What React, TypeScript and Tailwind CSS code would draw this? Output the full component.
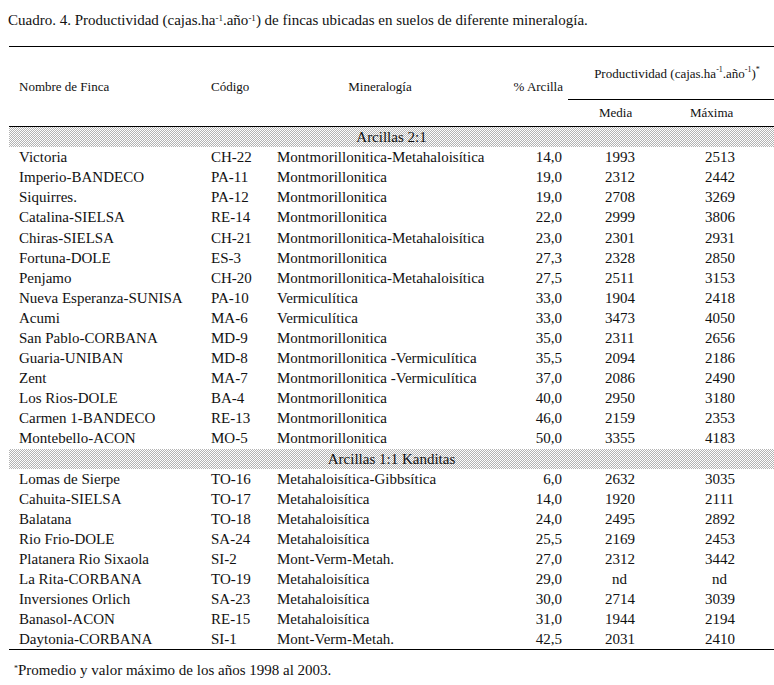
const grupo1 = [
  ["Victoria", "CH-22", "Montmorillonitica-Metahaloisítica", "14,0", "1993", "2513"],
  ["Imperio-BANDECO", "PA-11", "Montmorillonitica", "19,0", "2312", "2442"],
  ["Siquirres.", "PA-12", "Montmorillonitica", "19,0", "2708", "3269"],
  ["Catalina-SIELSA", "RE-14", "Montmorillonitica", "22,0", "2999", "3806"],
  ["Chiras-SIELSA", "CH-21", "Montmorillonitica-Metahaloisítica", "23,0", "2301", "2931"],
  ["Fortuna-DOLE", "ES-3", "Montmorillonitica", "27,3", "2328", "2850"],
  ["Penjamo", "CH-20", "Montmorillonitica-Metahaloisítica", "27,5", "2511", "3153"],
  ["Nueva Esperanza-SUNISA", "PA-10", "Vermiculítica", "33,0", "1904", "2418"],
  ["Acumi", "MA-6", "Vermiculítica", "33,0", "3473", "4050"],
  ["San Pablo-CORBANA", "MD-9", "Montmorillonitica", "35,0", "2311", "2656"],
  ["Guaria-UNIBAN", "MD-8", "Montmorillonitica -Vermiculítica", "35,5", "2094", "2186"],
  ["Zent", "MA-7", "Montmorillonitica -Vermiculítica", "37,0", "2086", "2490"],
  ["Los Rios-DOLE", "BA-4", "Montmorillonitica", "40,0", "2950", "3180"],
  ["Carmen 1-BANDECO", "RE-13", "Montmorillonitica", "46,0", "2159", "2353"],
  ["Montebello-ACON", "MO-5", "Montmorillonitica", "50,0", "3355", "4183"],
];

const grupo2 = [
  ["Lomas de Sierpe", "TO-16", "Metahaloisítica-Gibbsítica", "6,0", "2632", "3035"],
  ["Cahuita-SIELSA", "TO-17", "Metahaloisítica", "14,0", "1920", "2111"],
  ["Balatana", "TO-18", "Metahaloisítica", "24,0", "2495", "2892"],
  ["Rio Frio-DOLE", "SA-24", "Metahaloisítica", "25,5", "2169", "2453"],
  ["Platanera Rio Sixaola", "SI-2", "Mont-Verm-Metah.", "27,0", "2312", "3442"],
  ["La Rita-CORBANA", "TO-19", "Metahaloisítica", "29,0", "nd", "nd"],
  ["Inversiones Orlich", "SA-23", "Metahaloisítica", "30,0", "2714", "3039"],
  ["Banasol-ACON", "RE-15", "Metahaloisítica", "31,0", "1944", "2194"],
  ["Daytonia-CORBANA", "SI-1", "Mont-Verm-Metah.", "42,5", "2031", "2410"],
];

const cols = "grid grid-cols-[196px_65px_220px_78px_102px_104px]";

function Fila({ row }: { row: string[] }) {
  return (
    <div className={`${cols} h-[20.1px] items-center text-[15px] leading-[20px] text-[#111]`}>
      <span className="pl-[10px] whitespace-nowrap">{row[0]}</span>
      <span className="pl-[6px] whitespace-nowrap">{row[1]}</span>
      <span className="pl-[7px] whitespace-nowrap">{row[2]}</span>
      <span className="pr-[6px] text-right">{row[3]}</span>
      <span className={row[4] === "nd" ? "pl-[44px]" : "pl-[37px]"}>{row[4]}</span>
      <span className={row[5] === "nd" ? "pl-[42px]" : "pl-[35px]"}>{row[5]}</span>
    </div>
  );
}

function Grupo({ label }: { label: string }) {
  return (
    <div className="h-[20.1px] bg-[repeating-conic-gradient(#b4b4b4_0_25%,#ffffff_0_50%)] bg-[length:2px_2px] text-center text-[15px] leading-[20px] text-[#111]">
      {label}
    </div>
  );
}

export default function App() {
  return (
    <div className="h-[685px] w-[774px] bg-white font-['Liberation_Serif',serif] text-[#111]">
      <p className="pl-[8px] pt-[11px] text-[15px] leading-[18px]">
        Cuadro. 4. Productividad (cajas.ha<sup className="text-[9px]">-1</sup>.año<sup className="text-[9px]">-1</sup>) de fincas ubicadas en suelos de diferente mineralogía.
      </p>

      <div className="ml-[9px] mt-[17px]">
        <div className="border-t border-black" />
        <div className={`${cols} h-[79px] text-[13px]`}>
          <span className="pl-[10px] self-center pt-[1px]">Nombre de Finca</span>
          <span className="pl-[6px] self-center pt-[1px]">Código</span>
          <span className="self-center pt-[1px] text-center">Mineralogía</span>
          <span className="self-center pt-[1px] pr-[5px] text-right">% Arcilla</span>
          <div className="col-span-2 flex flex-col">
            <div className="flex h-[52px] items-center justify-center pl-[12px] pt-[1px] whitespace-nowrap">
              Productividad (cajas.ha<sup className="text-[8px]">-1</sup>.año<sup className="text-[8px]">-1</sup>)<sup className="text-[8px]">*</sup>
            </div>
            <div className="grid flex-1 grid-cols-[102px_104px] items-center border-t border-black">
              <span className="pl-[31px]">Media</span>
              <span className="pl-[20px]">Máxima</span>
            </div>
          </div>
        </div>
        <div className="border-t border-black" />
        <Grupo label="Arcillas 2:1" />
        {grupo1.map((r) => (
          <Fila key={r[0]} row={r} />
        ))}
        <Grupo label="Arcillas 1:1 Kanditas" />
        {grupo2.map((r) => (
          <Fila key={r[0]} row={r} />
        ))}
        <div className="border-t border-black" />
      </div>

      <p className="pl-[14px] pt-[11px] text-[15px] leading-[18px]">
        <sup className="text-[8px]">*</sup>Promedio y valor máximo de los años 1998 al 2003.
      </p>
    </div>
  );
}
